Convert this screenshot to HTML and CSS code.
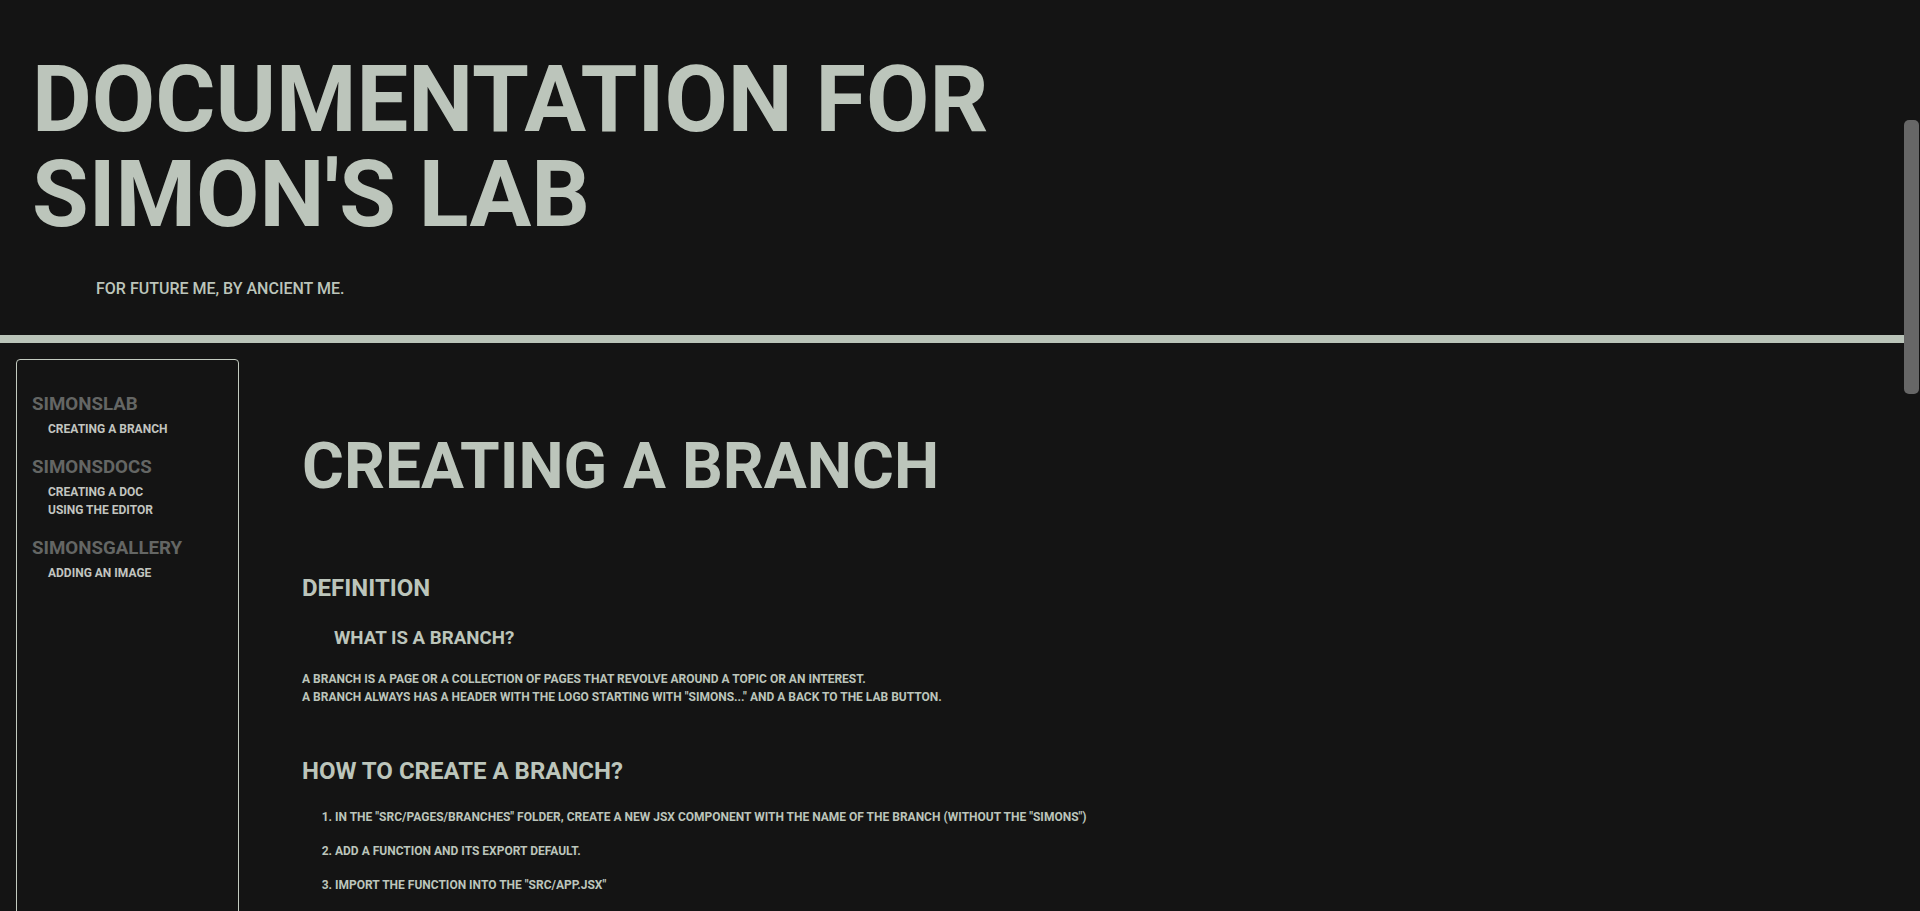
FILE: index.html
```html
<!DOCTYPE html>
<html lang="en">
<head>
<meta charset="utf-8">
<title>Documentation for Simon's Lab</title>
<link rel="stylesheet" href="styles.css">
</head>
<body>
<div class="page">
  <header class="site-header">
    <h1 class="site-title">Documentation for<br>Simon's Lab</h1>
    <p class="site-tagline">For future me, by ancient me.</p>
  </header>
  <div class="divider"></div>
  <div class="layout">
    <nav class="sidebar">
      <div class="nav-group">
        <div class="nav-title">SimonsLab</div>
        <ul class="nav-items">
          <li>Creating a branch</li>
        </ul>
      </div>
      <div class="nav-group">
        <div class="nav-title">SimonsDocs</div>
        <ul class="nav-items">
          <li>Creating a doc</li>
          <li>Using the editor</li>
        </ul>
      </div>
      <div class="nav-group">
        <div class="nav-title">SimonsGallery</div>
        <ul class="nav-items">
          <li>Adding an image</li>
        </ul>
      </div>
    </nav>
    <main class="content">
      <h1 class="page-title">Creating a branch</h1>
      <h2 class="section-title">Definition</h2>
      <h3 class="sub-title">What is a branch?</h3>
      <p class="text">A branch is a page or a collection of pages that revolve around a topic or an interest.<br>A branch always has a header with the logo starting with "Simons..." and a back to the lab button.</p>
      <h2 class="section-title section-gap">How to create a branch?</h2>
      <ol class="steps">
        <li>In the "src/pages/branches" folder, create a new JSX component with the name of the branch (without the "Simons")</li>
        <li>Add a function and its export default.</li>
        <li>Import the function into the "src/App.jsx"</li>
      </ol>
    </main>
  </div>
</div>
<div class="scrollbar" aria-hidden="true"><div class="scroll-thumb"></div></div>
</body>
</html>
```

FILE: styles.css
```css
html {
  background: #141414;
}
body {
  margin: 0;
  height: 100vh;
  overflow: hidden;
  display: flex;
  background: #141414;
  color: #bcc5bb;
  font-family: Roboto, "Liberation Sans", sans-serif;
  font-weight: 700;
  text-transform: uppercase;
}
.page {
  flex: 1;
  min-width: 0;
  overflow: hidden;
}
.scrollbar {
  flex: 0 0 16px;
  padding-top: 120px;
  box-sizing: border-box;
}
.scroll-thumb {
  width: 15px;
  height: 274px;
  background: #676767;
  border-radius: 5px;
}
.site-header {
  padding: 52px 0 0 32px;
}
.site-title {
  margin: 0;
  font-size: 92px;
  line-height: 95px;
  font-weight: 700;
}
.site-tagline {
  margin: 36.5px 0 0 64px;
  font-size: 16px;
  line-height: 19px;
  font-weight: 500;
}
.divider {
  margin-top: 37.5px;
  height: 8px;
  background: #bac4b9;
}
.layout {
  display: flex;
  min-height: 2255px;
  padding: 16px 0 16px 16px;
}
.sidebar {
  flex: 0 0 auto;
  width: 191px;
  padding: 33px 15px;
  border: 1px solid #c3cbc0;
  border-radius: 4px;
  display: flex;
  flex-direction: column;
  gap: 18.5px;
}
.nav-title {
  font-size: 18.72px;
  line-height: 22px;
  color: #646664;
  margin-bottom: 4.5px;
}
.nav-items {
  list-style: none;
  margin: 0;
  padding: 0 0 0 16px;
  font-size: 12px;
  line-height: 18px;
  color: #c2c5c0;
}
.content {
  flex: 1;
  padding-left: 63px;
  padding-top: 70px;
}
.page-title {
  margin: 0;
  font-size: 64px;
  line-height: 75px;
}
.section-title {
  margin: 70px 0 0;
  font-size: 24px;
  line-height: 28px;
}
.section-title.section-gap {
  margin-top: 51.5px;
}
.sub-title {
  margin: 25px 0 0 32px;
  font-size: 18.72px;
  line-height: 22px;
}
.text {
  margin: 20.5px 0 0;
  font-size: 12px;
  line-height: 18px;
}
.steps {
  margin: 22.5px 0 0;
  padding-left: 33px;
  font-size: 12px;
  line-height: 18px;
  display: flex;
  flex-direction: column;
  gap: 16px;
}
```
